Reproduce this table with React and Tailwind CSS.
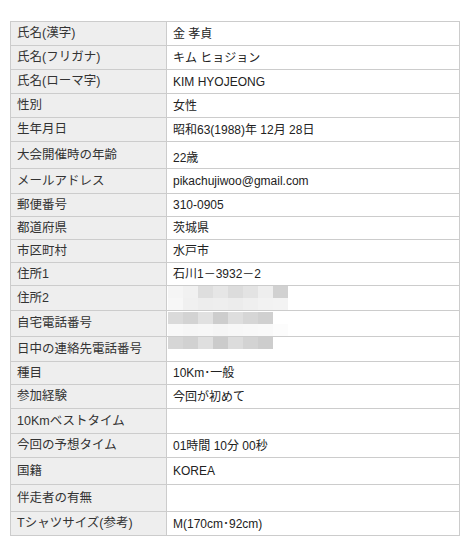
import React from 'react';

const ROWS = [
  { label: '氏名(漢字)', value: '金 孝貞', h: 'h-[24px]' },
  { label: '氏名(フリガナ)', value: 'キム ヒョジョン', h: 'h-[24px]' },
  { label: '氏名(ローマ字)', value: 'KIM HYOJEONG', h: 'h-[24px]' },
  { label: '性別', value: '女性', h: 'h-[24px]' },
  { label: '生年月日', value: '昭和63(1988)年 12月 28日', h: 'h-[24px]' },
  { label: '大会開催時の年齢', value: '22歳', h: 'h-[27px]', valuePad: 'pt-[5px]' },
  { label: 'メールアドレス', value: 'pikachujiwoo@gmail.com', h: 'h-[25px]' },
  { label: '郵便番号', value: '310-0905', h: 'h-[23px]' },
  { label: '都道府県', value: '茨城県', h: 'h-[23px]' },
  { label: '市区町村', value: '水戸市', h: 'h-[23px]' },
  { label: '住所1', value: '石川1－3932－2', h: 'h-[23px]' },
  { label: '住所2', blur: 'a', h: 'h-[24px]' },
  { label: '自宅電話番号', blur: 'b', h: 'h-[26px]' },
  { label: '日中の連絡先電話番号', blur: 'c', h: 'h-[25px]' },
  { label: '種目', value: '10Km･一般', h: 'h-[23px]' },
  { label: '参加経験', value: '今回が初めて', h: 'h-[24px]' },
  { label: '10Kmベストタイム', value: '', h: 'h-[25px]' },
  { label: '今回の予想タイム', value: '01時間 10分 00秒', h: 'h-[24px]' },
  { label: '国籍', value: 'KOREA', h: 'h-[27px]' },
  { label: '伴走者の有無', value: '', h: 'h-[27px]' },
  { label: 'Tシャツサイズ(参考)', value: 'M(170cm･92cm)', h: 'h-[24px]' },
];

// mosaic for the hidden personal data
const MOSAIC = {
  a: [
    ['#f5f5f5', '#f1f1f1', '#dedede', '#e6e6e6', '#dcdcdc', '#e3e3e3', '#eeeeee', '#d1d1d1'],
    ['#f7f7f7', '#f0f0f0', '#ededed', '#eeeeee', '#ececec', '#efefef', '#f2f2f2', '#f3f3f3'],
  ],
  b: [
    ['#dadada', '#d3d3d3', '#e1e1e1', '#cdcdcd', '#dedede', '#d6d6d6', '#d0d0d0'],
    ['#f8f8f8', '#f6f6f6', '#f7f7f7', '#f5f5f5', '#f7f7f7', '#f8f8f8', '#f9f9f9', '#fcfcfc'],
  ],
  c: [
    ['#d6d6d6', '#d1d1d1', '#dfdfdf', '#cbcbcb', '#dcdcdc', '#d3d3d3', '#cdcdcd'],
    ['#ffffff'],
  ],
};

const Mosaic = ({ kind }) => (
  <div className="flex flex-col">
    {MOSAIC[kind].map((band, i) => (
      <div key={i} className="flex h-[12px]">
        {band.map((c, j) => (
          <div key={j} className="w-[15px] h-full" style={{ backgroundColor: c }} />
        ))}
      </div>
    ))}
  </div>
);

const App = () => {
  return (
    <div className="min-h-[557px] bg-white pt-[21px] pl-[10px]">
      <table
        className="w-[450px] border-collapse text-[12px] text-[#222]"
        style={{ fontFamily: '"Liberation Sans", "Noto Sans CJK JP", sans-serif' }}
      >
        <tbody>
          {ROWS.map((r) => (
            <tr key={r.label} className={r.h}>
              <td className="w-[156px] bg-[#eeeeee] border border-[#cccccc] pl-[6px] text-[12.5px] text-[#333] leading-none align-middle">
                {r.label}
              </td>
              <td className={`border border-[#cccccc] leading-none ${r.blur ? 'p-0 pl-px align-bottom' : 'pl-[6px] align-middle'} ${r.valuePad || ''}`}>
                {r.blur ? <Mosaic kind={r.blur} /> : r.value}
              </td>
            </tr>
          ))}
        </tbody>
      </table>
    </div>
  );
};

export default App;
